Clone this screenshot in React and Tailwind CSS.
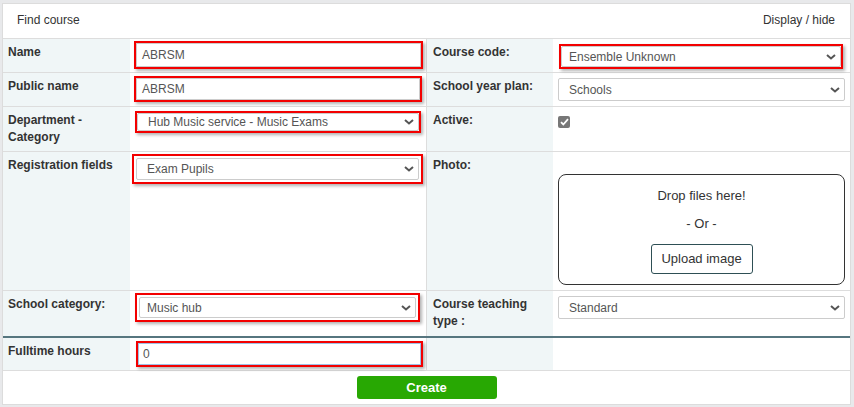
import React from 'react';

const Chevron = () => (
    <svg width="10" height="6" viewBox="0 0 10 6" className="shrink-0">
        <path d="M1 1l4 3.5L9 1" fill="none" stroke="#555" strokeWidth="2" />
    </svg>
);

const RedBox = ({ className = '', children }) => (
    <div className={`border-2 border-[#f30000] shadow-[2px_2px_3px_rgba(0,0,0,0.3)] ${className}`}>
        {children}
    </div>
);

const TextBox = ({ value, height, className = 'border-[#ccc] pl-[5px]' }) => (
    <div className={`flex items-center bg-white border text-[12px] text-[#555] ${height} ${className}`}>
        {value}
    </div>
);

const SelectBox = ({ value, height, pad = 'pl-[10px]' }) => (
    <div className={`flex items-center justify-between bg-white border border-[#ccc] rounded-[2px] pr-[4px] text-[12px] text-[#555] ${pad} ${height}`}>
        <span>{value}</span>
        <Chevron />
    </div>
);

const Row = ({ height, className = 'border-b border-[#ddd]', cells }) => (
    <div className={`grid grid-cols-[127px_297px_126px_1fr] ${height} ${className}`}>
        <div className="bg-[#f0f6f7] px-[5px] pt-[5px] text-[12px] leading-[17px] font-bold text-[#333]">{cells[0]}</div>
        <div className="border-r border-[#ddd] pl-[4px] pr-[3px]">{cells[1]}</div>
        <div className="bg-[#f0f6f7] pl-[6px] pr-[5px] pt-[5px] text-[12px] leading-[17px] font-bold text-[#333]">{cells[2]}</div>
        <div className="pl-[5px] pr-[5px]">{cells[3]}</div>
    </div>
);

export default function App() {
    return (
        <div className="min-h-screen bg-[#e8e9eb] pt-[3px] pl-[2px] pr-[3px] font-['Liberation_Sans',Arial,sans-serif]">
            <div className="bg-white border border-[#dcdcdc]">
                <div className="h-[35px] border-b border-[#ddd] flex items-center justify-between pl-[14px] pr-[15px] pb-[2px] text-[12px] text-[#333]">
                    <span>Find course</span>
                    <span>Display / hide</span>
                </div>

                <Row
                    height="h-[34px]"
                    cells={[
                        'Name',
                        <RedBox className="mt-[2px]"><TextBox value="ABRSM" height="h-[24px]" /></RedBox>,
                        'Course code:',
                        <RedBox className="mt-[5px] ml-[1px] mr-[2px]"><SelectBox value="Ensemble Unknown" height="h-[21px]" pad="pl-[7px]" /></RedBox>,
                    ]}
                />
                <Row
                    height="h-[34px]"
                    cells={[
                        'Public name',
                        <RedBox className="mt-[3px] mr-[1px]"><TextBox value="ABRSM" height="h-[22px]" /></RedBox>,
                        'School year plan:',
                        <div className="pt-[5px]"><SelectBox value="Schools" height="h-[23px]" /></div>,
                    ]}
                />
                <Row
                    height="h-[45px]"
                    cells={[
                        <>Department -<br />Category</>,
                        <RedBox className="mt-[4px] ml-[1px] mr-[2px]"><SelectBox value="Hub Music service - Music Exams" height="h-[18px]" /></RedBox>,
                        'Active:',
                        <div className="pt-[9px]">
                            <div className="w-[12px] h-[12px] rounded-[2px] bg-[#777] flex items-center justify-center">
                                <svg width="9" height="8" viewBox="0 0 9 8">
                                    <path d="M1 4.2l2.3 2.3L8 1.2" fill="none" stroke="#fff" strokeWidth="1.8" />
                                </svg>
                            </div>
                        </div>,
                    ]}
                />
                <Row
                    height="h-[139px]"
                    cells={[
                        'Registration fields',
                        <RedBox className="mt-[2px] ml-[-2px] p-[2px]"><SelectBox value="Exam Pupils" height="h-[22px]" /></RedBox>,
                        'Photo:',
                        <div className="pt-[22px]">
                            <div className="h-[111px] border border-[#333] rounded-[8px] flex flex-col items-center pt-[12px] text-[13px] leading-[18px] text-[#333]">
                                <div>Drop files here!</div>
                                <div className="mt-[10px]">- Or -</div>
                                <div className="mt-[11px] h-[30px] w-[102px] border border-[#2e4f55] rounded-[3px] flex items-center justify-center">
                                    Upload image
                                </div>
                            </div>
                        </div>,
                    ]}
                />
                <Row
                    height="h-[47px]"
                    className="border-b-2 border-[#56767f]"
                    cells={[
                        'School category:',
                        <RedBox className="mt-[2px] ml-[1px] mr-[3px] p-[2px]"><SelectBox value="Music hub" height="h-[21px]" pad="pl-[7px]" /></RedBox>,
                        <>Course teaching<br />type :</>,
                        <div className="pt-[5px]"><SelectBox value="Standard" height="h-[23px]" /></div>,
                    ]}
                />
                <Row
                    height="h-[33px]"
                    cells={[
                        'Fulltime hours',
                        <RedBox className="mt-[3px] ml-[2px]"><TextBox value="0" height="h-[22px]" className="pl-[4px] border-[#9fc1e6]" /></RedBox>,
                        '',
                        null,
                    ]}
                />
                <div className="h-[33px] flex justify-center pt-[5px]">
                    <button className="h-[23px] w-[140px] bg-[#28a803] rounded-[3px] text-white text-[13px] font-bold">
                        Create
                    </button>
                </div>
            </div>
        </div>
    );
}
